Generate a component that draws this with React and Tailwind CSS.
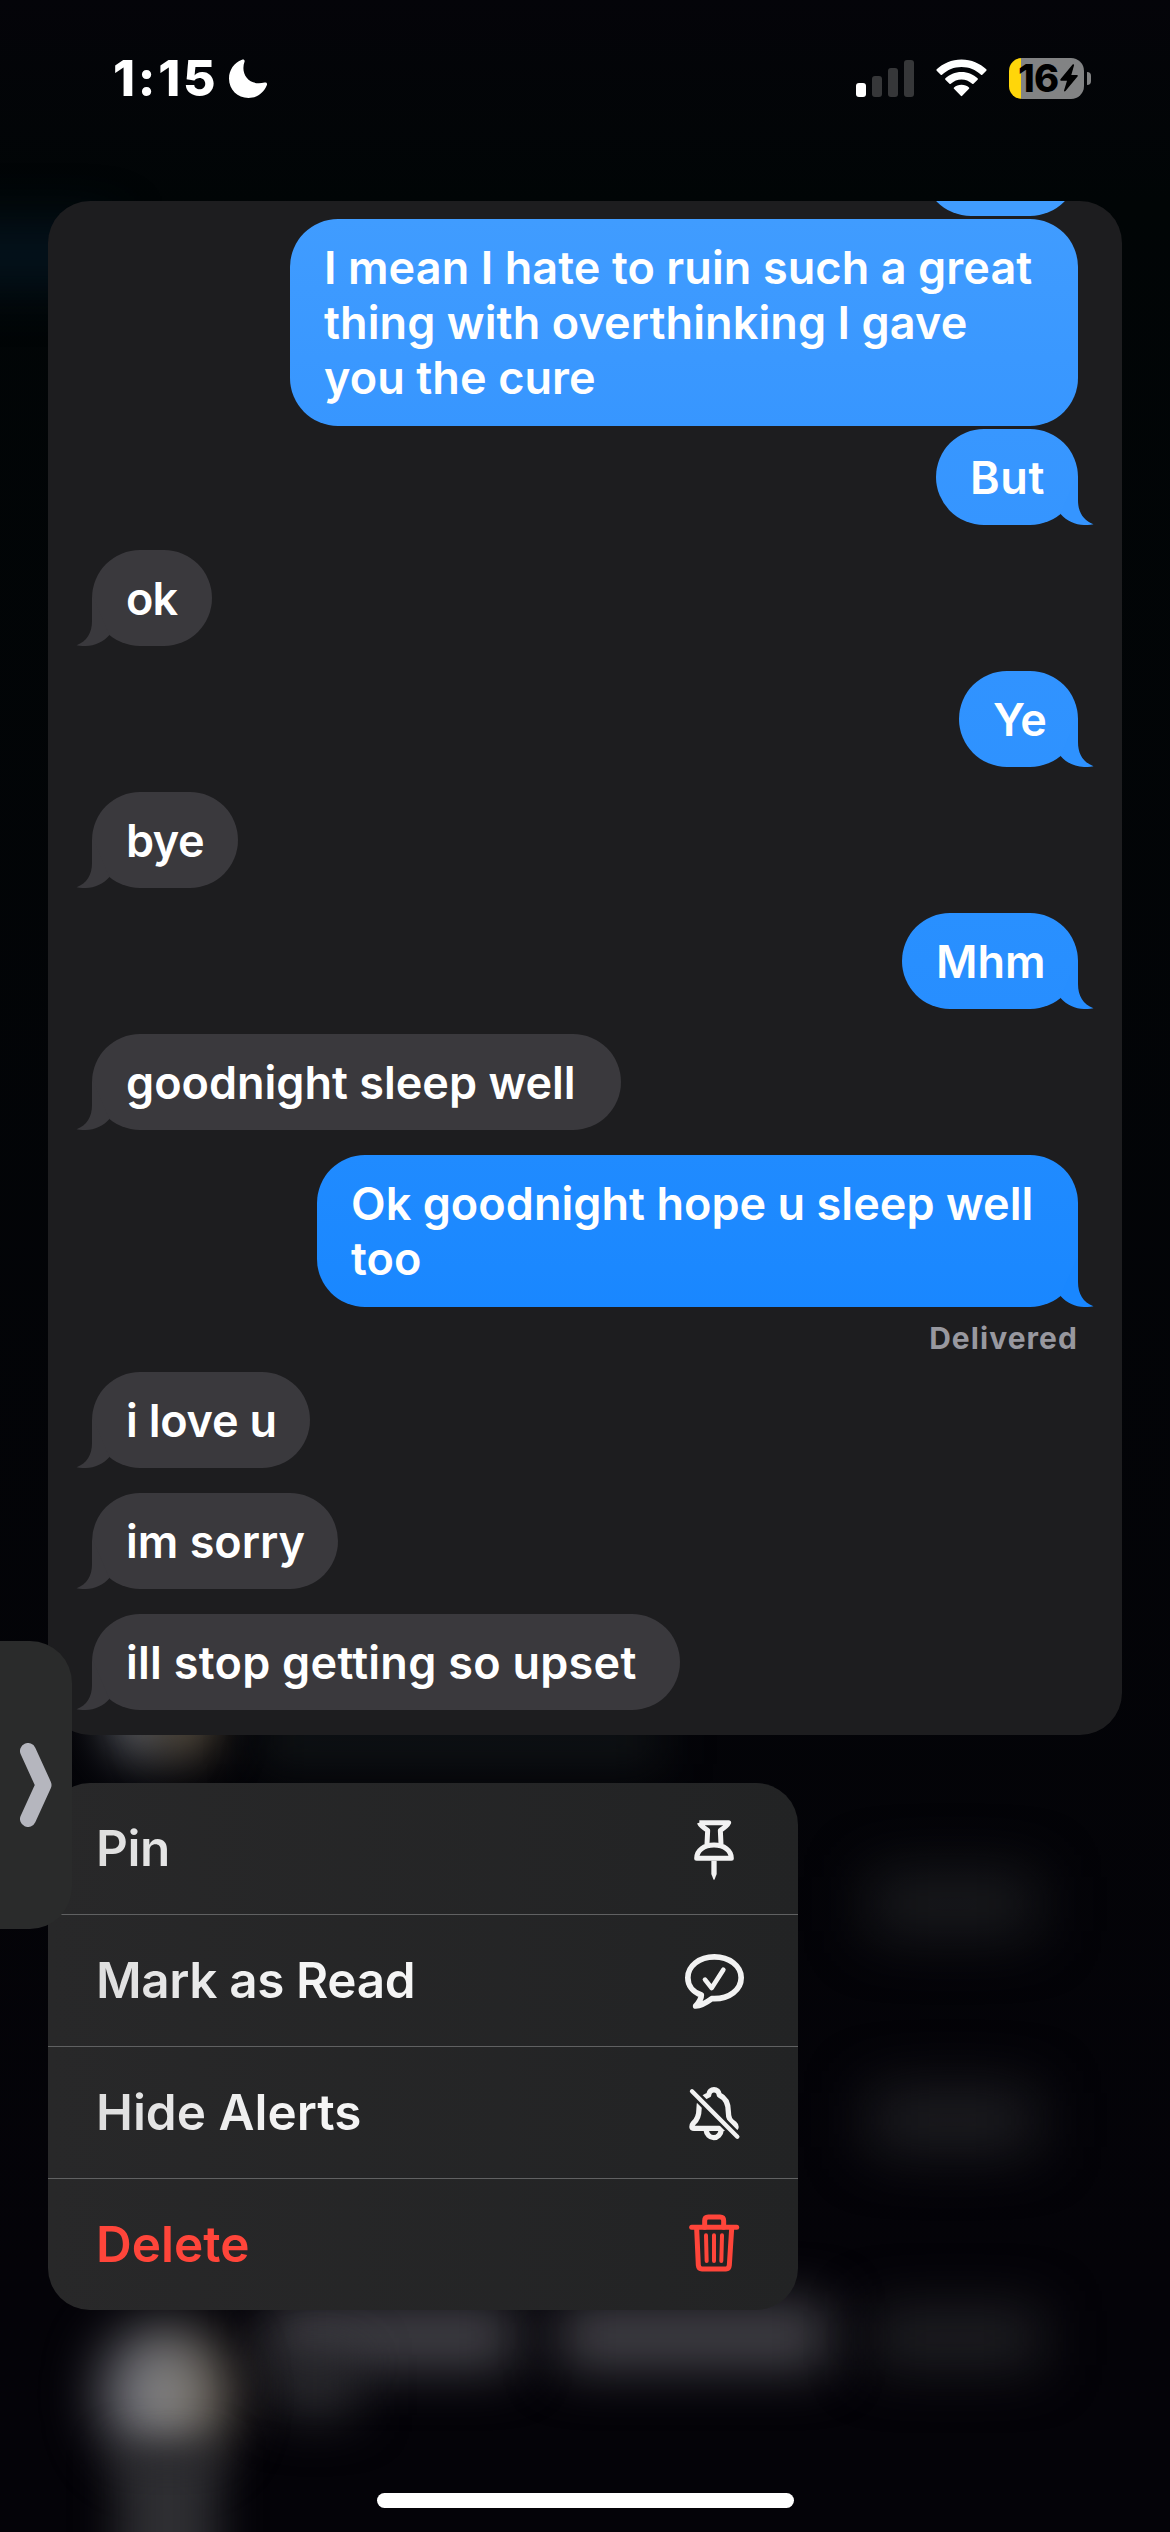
import clsx from "clsx";

const messages = [
  { text: "I mean I hate to ruin such a great thing with overthinking I gave you the cure", mine: true, size: "mt-[3px] h-[207px] w-[788px]", color: "from-[#409cff] to-[#3796ff]", tracking: "tracking-[0.002em]" },
  { text: "But", mine: true, size: "mt-[3px] h-[96px] w-[142px]", color: "from-[#3897ff] to-[#3595ff]", tail: "text-[#3595ff]", tracking: "tracking-[0.015em]" },
  { text: "ok", size: "mt-[25px] h-[96px] w-[120px]", tail: "text-[#3a393d]", tracking: "tracking-[-0.02em]" },
  { text: "Ye", mine: true, size: "mt-[25px] h-[96px] w-[119px]", color: "from-[#3193ff] to-[#2e92ff]", tail: "text-[#2e92ff]", tracking: "tracking-[-0.01em]" },
  { text: "bye", size: "mt-[25px] h-[96px] w-[146px]", tail: "text-[#3a393d]", tracking: "tracking-[-0.01em]" },
  { text: "Mhm", mine: true, size: "mt-[25px] h-[96px] w-[176px]", color: "from-[#2990ff] to-[#278eff]", tail: "text-[#278eff]", tracking: "tracking-[0em]" },
  { text: "goodnight sleep well", size: "mt-[25px] h-[96px] w-[529px]", tail: "text-[#3a393d]", tracking: "tracking-[0em]" },
  { text: "Ok goodnight hope u sleep well too", mine: true, size: "mt-[25px] h-[152px] w-[761px]", color: "from-[#208bff] to-[#1987ff]", tail: "text-[#1987ff]", tracking: "tracking-[0.001em]", delivered: true },
  { text: "i love u", size: "mt-[17px] h-[96px] w-[218px]", tail: "text-[#3a393d]", tracking: "tracking-[-0.005em]" },
  { text: "im sorry", size: "mt-[25px] h-[96px] w-[246px]", tail: "text-[#3a393d]", tracking: "tracking-[0em]" },
  { text: "ill stop getting so upset", size: "mt-[25px] h-[96px] w-[588px]", tail: "text-[#3a393d]", tracking: "tracking-[0.006em]" },
];

const menuItems = [
  { label: "Pin", Icon: PinIcon, tracking: "tracking-[-0.01em]" },
  { label: "Mark as Read", Icon: ReadIcon, tracking: "tracking-[-0.008em]" },
  { label: "Hide Alerts", Icon: BellOffIcon, tracking: "tracking-[0em]" },
  { label: "Delete", Icon: TrashIcon, tracking: "tracking-[0em]", danger: true },
];

function PinIcon() {
  return (
    <svg viewBox="0 0 204 198" className="h-[66px] w-[68px]" fill="none" stroke="currentColor" strokeWidth="15" strokeLinejoin="round">
      <path d="M58 20 H146 Q142 30 121 43 L123 84 M58 20 Q62 30 83 43 L81 84" />
      <path d="M50 127 C50 103 72 87 102 87 C132 87 154 103 154 127 Z" />
      <path d="M94 134 H110 V174 L104 190 Q102 193 100 190 L94 174 Z" fill="currentColor" stroke="none" />
    </svg>
  );
}

function ReadIcon() {
  return (
    <svg viewBox="0 0 204 198" className="h-[66px] w-[68px]" fill="none" stroke="currentColor" strokeWidth="17" strokeLinejoin="round" strokeLinecap="round">
      <path d="M64 141 C38 132 23.5 112 23.5 89 C23.5 54 58 26.5 103 26.5 C148 26.5 183.5 54 183.5 89 C183.5 125 148 152 103 152 H95 C80 163 64 173 47 174 C59 161 64 153 64 141 Z" />
      <path d="M75 95 L95 120 L130 65" strokeWidth="14" />
    </svg>
  );
}

function BellOffIcon() {
  return (
    <svg viewBox="0 0 204 198" className="h-[66px] w-[68px]" fill="none" stroke="currentColor" strokeWidth="16" strokeLinejoin="round">
      <mask id="bell-gap" maskUnits="userSpaceOnUse" x="0" y="0" width="204" height="198">
        <rect width="204" height="198" fill="white" stroke="none" />
        <path d="M16 14 L192 190" stroke="black" strokeWidth="28" />
      </mask>
      <g mask="url(#bell-gap)">
        <path d="M60 64 C68 54 80 47 86 45 C88 24 116 24 118 45 C138 54 145 72 145 95 C145 116 150 122 164 132 C170 137 170 145 162 145 H42 C34 145 34 137 40 130 C54 118 57 105 57 88 C57 78 58 70 60 64 Z" />
        <path d="M78 148 C80 164 90 173 101 173 C113 173 122 164 124 148" />
      </g>
      <path d="M36 34 L172 170" strokeWidth="13" strokeLinecap="round" />
    </svg>
  );
}

function TrashIcon() {
  return (
    <svg viewBox="0 0 204 198" className="h-[66px] w-[68px]" fill="none" stroke="currentColor" strokeWidth="15" strokeLinejoin="round" strokeLinecap="round">
      <path d="M35 46 H170" />
      <path d="M74 46 V26 Q74 15 85 15 H120 Q131 15 131 26 V46" />
      <path d="M50 50 L55 160 Q56 171 66 171 H138 Q147 171 148 160 L155 50" />
      <path d="M78 70 L80 147 M102 70 V147 M126 70 L124 147" strokeWidth="12" />
    </svg>
  );
}

function StatusBar() {
  return (
    <header className="flex h-[156px] items-center justify-between pr-[79px] pl-[113px] text-white">
      <div className="flex items-center">
        <span className="w-[116px] text-[50px] leading-none font-extrabold tracking-[0.055em]">1:15</span>
        <svg viewBox="0 0 38 39" className="h-[39px] w-[38px]" fill="white">
          <path d="M13 .8 C14.5 0 16 1 15.600 2.500 C11 15 20 27.500 35.500 23.600 C37.500 23 38.600 24.500 37.800 26.300 C34.500 34 28 39 19.500 39 C8.500 39 0 30.500 0 19.500 C0 11 5 4 13 .8 Z" />
        </svg>
      </div>

      <div className="flex items-center">
        <div className="flex h-[37px] items-end gap-[6px]">
          <div className="h-[14px] w-[10px] rounded-[3px] bg-white" />
          <div className="h-[21px] w-[10px] rounded-[3px] bg-[#363739]" />
          <div className="h-[29px] w-[10px] rounded-[3px] bg-[#363739]" />
          <div className="h-[37px] w-[10px] rounded-[3px] bg-[#363739]" />
        </div>
        <svg viewBox="0 0 51 38" className="ml-[22px] h-[38px] w-[51px]" fill="white">
          <path d="M25.500 .5 C35.500 .5 44 4.500 50.300 10.300 Q51 11 50.300 11.700 L46.300 15.700 Q45.700 16.300 45 15.700 C39.500 10.700 33 8 25.500 8 C18 8 11.500 10.700 6 15.700 Q5.300 16.300 4.700 15.700 L.7 11.700 Q0 11 .7 10.300 C7 4.500 15.500 .5 25.500 .5 Z" />
          <path d="M25.500 13 C32 13 37.500 15.500 41.600 19.300 Q42.300 20 41.600 20.700 L37.500 24.700 Q36.900 25.300 36.200 24.700 C33 22 29.500 20.500 25.500 20.500 C21.500 20.500 18 22 14.800 24.700 Q14.100 25.300 13.500 24.700 L9.400 20.700 Q8.700 20 9.400 19.300 C13.500 15.500 19 13 25.500 13 Z" />
          <path d="M25.500 25.700 C28.500 25.700 31 26.800 33 28.400 Q33.700 29 33 29.700 L26.200 36.800 Q25.500 37.500 24.800 36.800 L18 29.700 Q17.300 29 18 28.400 C20 26.800 22.500 25.700 25.500 25.700 Z" />
        </svg>
        <div className="ml-[22px] flex h-[41px] w-[75px] items-center rounded-[13px] bg-linear-to-r from-[#ffd60a] from-16% to-[#828384] to-16% pl-[9px] text-black">
          <span className="w-[42px] text-[38px] leading-[41px] font-extrabold tracking-[-0.02em]">16</span>
          <svg viewBox="0 0 18 28" className="h-[28px] w-[18px]" fill="black">
            <path d="M12.600 .6 C13.500 -.3 14.300 .3 14 1.400 L11.300 11 H17 Q18.300 11.200 17.500 12.500 L5.500 27 C4.600 27.900 3.700 27.300 4.100 26.200 L7 16.700 H1 Q-.2 16.400 .6 15 Z" />
          </svg>
        </div>
        <div className="ml-[3px] h-[13px] w-[4px] rounded-r-full bg-[#828384]" />
      </div>
    </header>
  );
}

function Bubble({ message }) {
  const { text, mine, size, color, tracking, tail } = message;

  return (
    <div
      className={clsx(
        "relative shrink-0 rounded-[48px] pt-[21px] pr-[28px] pl-[34px] text-[45px] leading-[55px] font-semibold text-white",
        mine ? "self-end bg-linear-to-b" : "self-start bg-[#3a393d]",
        color,
        size,
        tracking
      )}
    >
      {text}
      {tail && (
        <svg
          viewBox="-18 -50 34 50"
          className={clsx(
            "absolute bottom-0 h-[50px] w-[34px]",
            mine ? "-right-[16px]" : "-left-[16px] -scale-x-100",
            tail
          )}
          fill="currentColor"
        >
          <path d="M-1 -49 L0 -48 V-25 C0 -13 5 -5 15.500 -.7 C4 1.500 -9 -1 -17.400 -11 Z" />
        </svg>
      )}
    </div>
  );
}

function Conversation() {
  return (
    <section className="flex h-[1534px] flex-col overflow-hidden rounded-[42px] bg-[#1d1d1f] px-[44px]">
      {/* previous message, scrolled almost out of view */}
      <div className="-mt-[81px] h-[96px] w-[155px] shrink-0 self-end rounded-[48px] bg-[#409cff]" />
      {messages.map((message) => (
        <div key={message.text} className="flex flex-col">
          <Bubble message={message} />
          {message.delivered && (
            <p className="mt-[13px] h-[35px] text-right text-[30px] leading-[37px] font-bold tracking-[0.035em] text-[#98989f]">
              Delivered
            </p>
          )}
        </div>
      ))}
    </section>
  );
}

function ContextMenu() {
  return (
    <nav className="mt-[48px] h-[527px] w-[750px] overflow-hidden rounded-[42px] bg-linear-to-r from-[#282829] to-[#222324]">
      {menuItems.map(({ label, Icon, tracking, danger }, index) => (
        <button
          key={label}
          className={clsx(
            "flex w-full items-center justify-between pr-[50px] pl-[48px] text-[49.5px] font-semibold",
            index < 3 ? "h-[132px] border-b border-[#606162]" : "h-[131px]",
            danger ? "text-[#ff453a]" : "text-[#f2f2f2]",
            tracking
          )}
        >
          <span className={danger ? "" : "bg-linear-to-r from-[#dedede] to-[#f5f5f5] to-[200px] bg-clip-text text-transparent"}>
            {label}
          </span>
          <Icon />
        </button>
      ))}
    </nav>
  );
}

// blurred conversation list behind the preview
function Backdrop() {
  return (
    <div className="absolute inset-0 overflow-hidden bg-linear-to-b from-[#040409] via-[#010506] via-8% to-[#040308] to-90%">
      <div className="absolute top-[225px] -left-[60px] h-[60px] w-[170px] bg-[#04141f] blur-[26px]" />
      <div className="absolute top-[1655px] left-[108px] h-[105px] w-[66px] rounded-full bg-[#5d6067] blur-[24px]" />
      <div className="absolute top-[1655px] left-[158px] h-[105px] w-[56px] rounded-full bg-[#5a5040] blur-[24px]" />
      <div className="absolute top-[1715px] left-[260px] h-[50px] w-[400px] bg-[#101416] blur-[24px]" />
      <div className="absolute top-[1875px] left-[870px] h-[58px] w-[165px] bg-[#1c1d20] blur-[30px]" />
      <div className="absolute top-[2091px] left-[870px] h-[58px] w-[165px] bg-[#202024] blur-[30px]" />
      <div className="absolute top-[2303px] left-[270px] h-[66px] w-[245px] bg-[#434248] blur-[26px]" />
      <div className="absolute top-[2303px] left-[560px] h-[66px] w-[268px] bg-[#434248] blur-[26px]" />
      <div className="absolute top-[2310px] left-[870px] h-[56px] w-[170px] bg-[#212125] blur-[28px]" />
      <div className="absolute top-[2355px] left-[275px] h-[60px] w-[80px] bg-[#2a2a2e] blur-[26px]" />
      <div className="absolute top-[2327px] left-[103px] h-[134px] w-[126px] rounded-full bg-linear-to-r from-[#74757f] via-[#808082] to-[#7a6f5c] blur-[28px]" />
      <div className="absolute top-[2450px] left-[118px] h-[130px] w-[100px] bg-[#2e2e32] blur-[22px]" />
    </div>
  );
}

export default function App() {
  return (
    <main className="relative h-[2532px] w-[1170px] overflow-hidden font-['Inter',sans-serif]">
      <Backdrop />

      <div className="relative">
        <StatusBar />
        <div className="px-[48px] pt-[45px]">
          <Conversation />
          <ContextMenu />
        </div>
      </div>

      <div className="absolute top-[1641px] left-0 flex h-[288px] w-[72px] items-center rounded-r-[42px] bg-[#2a2b2b] pl-[20px]">
        <svg viewBox="0 0 32 84" className="h-[84px] w-[32px]" fill="none" stroke="#b5b6be" strokeWidth="16" strokeLinecap="round" strokeLinejoin="round">
          <path d="M8 8 L23.500 42 L8 76" />
        </svg>
      </div>

      <div className="absolute top-[2493px] left-[377px] h-[15px] w-[417px] rounded-full bg-white" />
    </main>
  );
}
